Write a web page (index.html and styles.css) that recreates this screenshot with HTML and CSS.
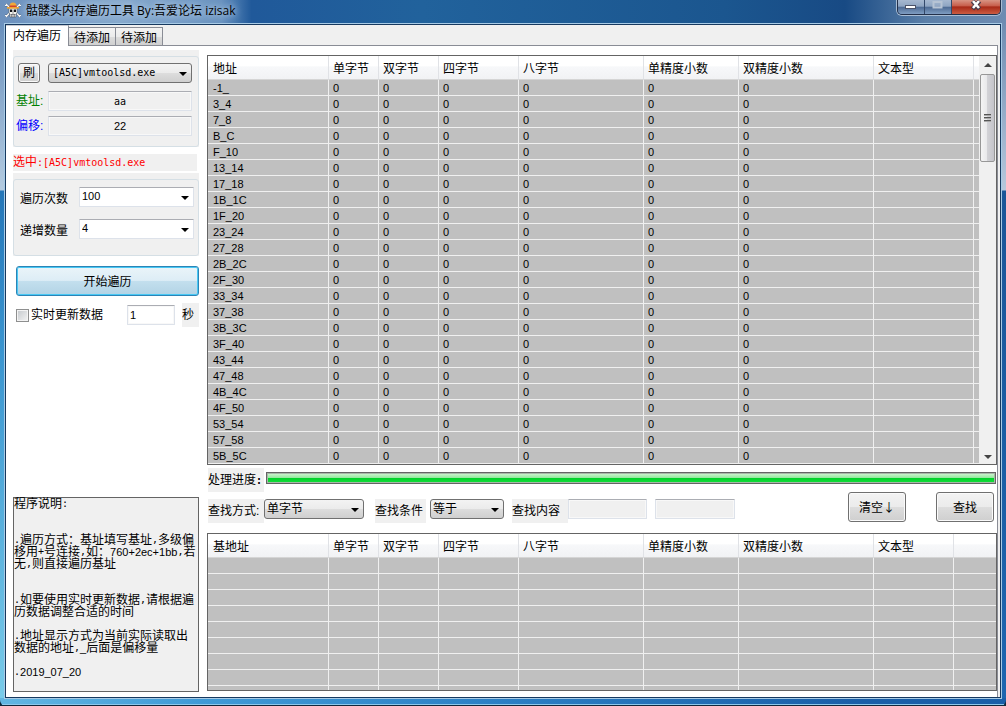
FILE: index.html
```html
<!DOCTYPE html>
<html lang="zh-CN">
<head>
<meta charset="utf-8">
<title>骷髅头内存遍历工具</title>
<link rel="stylesheet" href="styles.css">
</head>
<body>
<div class="window">
  <header class="titlebar">
    <svg class="app-icon" width="16" height="16" viewBox="0 0 16 16" aria-hidden="true">
      <path d="M1 2l3 3M0 3.500h2.500M15 2l-3 3M16 3.500h-2.500M1 15l3-3.500M0 13.500h2.500M15 15l-3-3.500M16 13.500h-2.500" stroke="#5a6a80" stroke-width="2" fill="none"/>
      <path d="M1 2l3 3M0 3.500h2.500M15 2l-3 3M16 3.500h-2.500M1 15l3-3.500M0 13.500h2.500M15 15l-3-3.500M16 13.500h-2.500" stroke="#f8f8f8" stroke-width="1.200" fill="none"/>
      <path d="M4 6h8v5l-1 1v3H5v-3l-1-1z" fill="#f3f3ee" stroke="#4a4a4a" stroke-width=".5"/>
      <path d="M4.500 4q0-3.500 3.500-3.500t3.500 3.500z" fill="#f0a93a"/>
      <path d="M4.500 3.500h7V5h-7z" fill="#d2422c"/>
      <path d="M2 5h12v1.600H2z" fill="#f2a52f"/>
      <path d="M5 7.500h2.300v2.500H5zM8.700 7.500H11V10H8.700zM7.600 10.500h.8v1h-.8z" fill="#15161a"/>
      <path d="M5.500 12.500h5M6.500 12v3M8 12v3M9.500 12v3" stroke="#55565c" stroke-width=".6"/>
    </svg>
    <h1 class="title">骷髅头内存遍历工具 By:吾爱论坛 izisak</h1>
    <div class="controls">
      <button class="ctl" aria-label="最小化"><svg width="28" height="15" viewBox="0 0 28 15"><rect x="8.500" y="5.500" width="10" height="3" fill="#fff" stroke="#4b5268"/></svg></button>
      <button class="ctl" aria-label="最大化"><svg width="28" height="15" viewBox="0 0 28 15"><rect x="9.500" y="2" width="8" height="5.500" fill="none" stroke="#b6c3d4" stroke-width="2"/></svg></button>
      <button class="ctl ctl-close" aria-label="关闭"><svg width="46" height="15" viewBox="0 0 46 15"><path d="M19.500 1l7 8M26.500 1l-7 8" stroke="#4a3a48" stroke-width="4.500"/><path d="M20 1l6 7M26 1l-6 7" stroke="#fff" stroke-width="2.600"/></svg></button>
    </div>
  </header>

  <main class="client">
    <nav class="tabs">
      <button class="tab tab-on">内存遍历</button>
      <button class="tab">待添加</button>
      <button class="tab">待添加</button>
    </nav>
    <div class="page">
      <aside class="side">
        <section class="group">
          <div class="group-in">
            <div class="row">
              <button class="btn btn-mini">刷</button>
              <span class="pick grow"><select class="mono" aria-label="进程"><option>[A5C]vmtoolsd.exe</option></select></span>
            </div>
            <div class="row row-field">
              <label class="green" for="base">基址:</label>
              <input class="box mono center grow" id="base" value="aa">
            </div>
            <div class="row row-offset">
              <label class="blue" for="offset">偏移:</label>
              <input class="box num center grow" id="offset" value="22">
            </div>
          </div>
        </section>
        <p class="chosen">选中<span class="mono">:[A5C]vmtoolsd.exe</span></p>
        <section class="group">
          <div class="group-in group-count">
            <div class="row">
              <label for="times">遍历次数</label>
              <span class="pick pick-white grow"><select class="num" id="times"><option>100</option></select></span>
            </div>
            <div class="row">
              <label for="step">递增数量</label>
              <span class="pick pick-white grow"><select class="num" id="step"><option>4</option></select></span>
            </div>
          </div>
        </section>
        <button class="btn btn-start">开始遍历</button>
        <div class="live">
          <input type="checkbox" class="check" id="live"><label for="live">实时更新数据</label>
          <input class="box box-white num seconds" id="sec" value="1">
          <label class="tag tag-sec" for="sec">秒</label>
        </div>
        <div class="notes">程序说明<i>:</i>


<i>.</i>遍历方式：基址填写基址<i>,</i>多级偏
移用<i>+</i>号连接<i>,</i>如：<b>760+2ec+1bb</b><i>,</i>若
无<i>,</i>则直接遍历基址


<i>.</i>如要使用实时更新数据<i>,</i>请根据遍
历数据调整合适的时间

<i>.</i>地址显示方式为当前实际读取出
数据的地址<i>,</i><b>_</b>后面是偏移量

<i>.</i><b>2019_07_20</b></div>
      </aside>

      <section class="content">
        <div class="list">
          <table class="grid">
            <colgroup><col class="c120"><col class="c50"><col class="c60"><col class="c80"><col class="c125"><col class="c95"><col class="c135"><col class="c100"><col></colgroup>
            <thead><tr><th>地址</th><th>单字节</th><th>双字节</th><th>四字节</th><th>八字节</th><th>单精度小数</th><th>双精度小数</th><th>文本型</th><th></th></tr></thead>
            <tbody id="memory"></tbody>
          </table>
          <div class="scroll">
            <span class="arrow arrow-up"></span>
            <div class="thumb"><span class="grip"></span></div>
            <span class="arrow arrow-down"></span>
          </div>
        </div>

        <div class="progress-row">
          <label class="tag" for="prog">处理进度<strong class="mono">:</strong></label>
          <progress id="prog" value="100" max="100"></progress>
        </div>

        <div class="search">
          <div class="filters">
            <label class="tag" for="mode">查找方式:</label>
            <span class="pick pick-mode"><select id="mode"><option>单字节</option></select></span>
            <label class="tag tag-cond" for="cond">查找条件</label>
            <span class="pick pick-cond"><select id="cond"><option>等于</option></select></span>
            <label class="tag tag-what" for="what">查找内容</label>
            <input class="box query" id="what">
            <input class="box query query-to" aria-label="查找内容上限">
          </div>
          <div class="actions">
            <button class="btn btn-act">清空↓</button>
            <button class="btn btn-act">查找</button>
          </div>
        </div>

        <div class="list list-found">
          <table class="grid">
            <colgroup><col class="c120"><col class="c50"><col class="c60"><col class="c80"><col class="c125"><col class="c95"><col class="c135"><col class="c80"><col></colgroup>
            <thead><tr><th>基地址</th><th>单字节</th><th>双字节</th><th>四字节</th><th>八字节</th><th>单精度小数</th><th>双精度小数</th><th>文本型</th><th></th></tr></thead>
            <tbody id="found"></tbody>
          </table>
        </div>
      </section>
    </div>
  </main>
</div>
<script src="app.js"></script>
</body>
</html>
```

FILE: app.js
```javascript
const hex = n => n.toString(16).toUpperCase();

function addRow(body, cells, className) {
  const row = body.insertRow();
  if (className) row.className = className;
  cells.forEach(text => { row.insertCell().textContent = text; });
}

const memory = document.getElementById('memory');
for (let i = 0; i < 24; i++) {
  const address = i === 0 ? '-1_' : hex(i * 4 - 1) + '_' + hex(i * 4);
  addRow(memory, [address, '0', '0', '0', '0', '0', '0', '', '']);
}

const found = document.getElementById('found');
for (let i = 0; i < 9; i++) {
  addRow(found, Array(9).fill(''), i === 8 ? 'rest' : '');
}
```

FILE: styles.css
```css
* { box-sizing: border-box; }

body {
  margin: 0;
  background: #10283c;
  color: #000;
  font: 12px/16px "Liberation Sans", "Noto Sans CJK SC", sans-serif;
}

button, input, select {
  font: inherit;
  color: inherit;
  margin: 0;
  padding: 0;
}

/* window frame */
.window {
  min-height: 100vh;
  display: flex;
  flex-direction: column;
  padding: 0 5px 8px;
  border-radius: 0 0 6px 6px;
  background:
    linear-gradient(#10283c, #10283c) bottom / 100% 1px no-repeat,
    linear-gradient(#8cc8ec, #8cc8ec) 0 calc(100% - 1px) / 100% 1px no-repeat,
    linear-gradient(90deg, #62b6e2, #3f9ad6 20%, #2b7fc4 50%, #1a5fa8 85%) bottom / 100% 8px no-repeat,
    linear-gradient(90deg, #6b90bd, #86a8cc 12%, #6a93c0 22%, #20599a 25%, #21629c 42%, #1b568f 72%, #184a84 84%, #5b7fa8 92%, #6e8cb2) top / 100% 24px no-repeat,
    linear-gradient(#5f88b8, #b4cbe0 190px, #2476b8 191px, #3a95d0 50%, #7accea) left / 50% 100% no-repeat,
    linear-gradient(#6584ac, #b6c8dc 190px, #1b5698 191px, #1d66b0) right / 50% 100% no-repeat;
}

.titlebar {
  display: flex;
  height: 24px;
}

.app-icon { margin-top: 2px; }

.title {
  flex: 1;
  margin: 3px 0 0 5px;
  font: 12px/16px "Open Sans", "Noto Sans CJK SC", sans-serif;
  text-shadow: 0 0 6px #b8d0ea, 0 0 8px #b8d0ea;
}

.controls {
  display: flex;
  height: 15px;
  border: 1px solid #23304a;
  border-top: 0;
  border-radius: 0 0 5px 5px;
  box-shadow: 0 0 0 1px #a9bdd4;
  overflow: hidden;
}

.ctl {
  width: 27px;
  border: 0;
  border-right: 1px solid #34496a;
  background: linear-gradient(#a6b8d0, #8fa5c2 45%, #4d6a93 50%, #7f9dc2);
  display: flex;
  justify-content: center;
}

.ctl svg { flex: none; }

.ctl-close {
  width: 48px;
  border-right: 0;
  background: linear-gradient(#d89484, #c8604e 40%, #a82a18 50%, #cc5c42);
}

.client {
  flex: 1;
  display: flex;
  flex-direction: column;
  border: 1px solid #17395f;
  box-shadow: 0 0 0 1px #a8cbe6;
  background: #f0f0f0;
}

/* tabs */
.tabs {
  display: flex;
  align-items: flex-end;
  height: 20px;
}

.tab {
  height: 18px;
  width: 47px;
  padding-top: 2px;
  border: 1px solid #898c95;
  border-bottom: 0;
  border-left: 0;
  background: linear-gradient(#f3f3f3, #ebebeb 50%, #dcdcdc 51%, #d0d0d0);
}

.tab-on {
  position: relative;
  width: 63px;
  height: 21px;
  margin-bottom: -1px;
  padding: 0;
  border-top: 1px solid #c8cad0;
  background: #fff;
}

.page {
  flex: 1;
  display: grid;
  grid-template-columns: 186px minmax(0, 1fr);
  column-gap: 8px;
  margin-right: 2px;
  padding-left: 7px;
  border: solid #898c95;
  border-width: 1px 1px 0 0;
  background: #fff;
}

/* shared controls */
.mono {
  font-family: "DejaVu Sans Mono", monospace;
  font-size: 10px;
}

.num { font-size: 11px; }

.grow { flex: 1; min-width: 0; }
.center { text-align: center; }
.green { color: #008000; }
.blue { color: #00f; }

.btn {
  border: 1px solid #707070;
  border-radius: 3px;
  background: linear-gradient(#f3f3f3, #ebebeb 50%, #dddddd 51%, #cfcfcf);
  box-shadow: inset 0 0 0 1px #fafafa;
  text-align: center;
}

.box {
  height: 20px;
  border: 1px solid #dde2ea;
  border-top-color: #abadb3;
  border-radius: 1px;
  background: #f0f0f0;
  box-shadow: inset 0 0 0 1px #f8f8f8;
}

.box-white { background: #fff; padding-left: 2px; }

.pick { position: relative; display: block; height: 20px; }

.pick select {
  appearance: none;
  display: block;
  width: 100%;
  height: 20px;
  padding: 0 16px 0 2px;
  border: 1px solid #707070;
  border-radius: 3px;
  background: linear-gradient(#f3f3f3, #ebebeb 50%, #dddddd 51%, #cfcfcf);
}

.pick .mono { padding-left: 4px; }

.pick::after {
  content: "";
  position: absolute;
  right: 5px;
  top: 9px;
  border: solid transparent;
  border-width: 4px 4px 0;
  border-top-color: #000;
  pointer-events: none;
}

.pick-white select {
  padding: 0 16px 2px 2px;
  border-color: #abadb3 #dde2ea #dde2ea;
  border-radius: 1px;
  background: #fff;
}

.tag {
  height: 24px;
  padding-top: 4px;
  background: #f0f0f0;
  white-space: nowrap;
}

/* left column */
.side {
  display: flex;
  flex-direction: column;
  padding: 4px 0 5px;
}

.group {
  padding-top: 6px;
  background: #f0f0f0;
}

.group-in {
  display: flex;
  flex-direction: column;
  height: 91px;
  padding: 6px 6px 0 4px;
  border: 1px solid #d5dfe5;
  border-radius: 3px;
}

.row { display: flex; align-items: center; height: 20px; }
.row-field { margin-top: 8px; }
.row-offset { margin-top: 5px; }
.row-field label, .row-offset label { width: 32px; margin-left: -2px; }
.btn-mini { width: 22px; height: 20px; margin-right: 8px; }

.chosen {
  margin: 7px 2px 2px 0;
  background: #f0f0f0;
  color: #f00;
}

.group-count {
  gap: 12px;
  height: 77px;
  padding: 7px 4px 0 6px;
}

.group-count label { width: 59px; padding-top: 3px; }

.btn-start {
  height: 30px;
  margin: 10px 0 0 3px;
  padding-top: 2px;
  border-color: #2c84b6;
  background: linear-gradient(#eaf4f9, #ddedf6 48%, #c3dfee 50%, #b2d3e5);
  box-shadow: inset 0 0 0 1px #48c8f4;
}

.live {
  display: flex;
  align-items: center;
  height: 24px;
  margin: 7px 0 0 3px;
}

.check {
  appearance: none;
  width: 13px;
  height: 13px;
  margin-right: 2px;
  border: 1px solid #8e8f8f;
  background: linear-gradient(135deg, #c4c8cc, #f4f4f4);
  box-shadow: inset 0 0 0 1px #f4f4f4;
}

.seconds { width: 48px; margin-left: auto; }
.tag-sec { width: 17px; margin-left: 7px; }

.notes {
  height: 195px;
  margin-top: auto;
  border: 1px solid #646464;
  background: #f0f0f0;
  line-height: 12px;
  white-space: pre;
}

.notes i, .notes b {
  font: 10px/12px "DejaVu Sans Mono", monospace;
  vertical-align: top;
}

.notes b { font: 11px/12px "Liberation Sans", sans-serif; }

/* right column */
.content {
  display: flex;
  flex-direction: column;
  padding: 9px 0 6px;
}

.list {
  display: flex;
  border: 1px solid #646464;
  background: #c0c0c0;
}

.grid {
  flex: 1;
  width: 0;
  table-layout: fixed;
  border-spacing: 0;
}

.c50 { width: 50px; }
.c60 { width: 60px; }
.c80 { width: 80px; }
.c95 { width: 95px; }
.c100 { width: 100px; }
.c120 { width: 120px; }
.c125 { width: 125px; }
.c135 { width: 135px; }

.grid th {
  height: 24px;
  padding: 2px 0 0 5px;
  border-bottom: 1px solid #d5d5d5;
  background: linear-gradient(#fff 45%, #f7f8fa 46%, #f1f2f4);
  font-weight: normal;
  text-align: left;
  white-space: nowrap;
}

.grid td {
  height: 16px;
  padding: 2px 0 0 5px;
  border-bottom: 1px solid #f0f0f0;
  font-size: 11px;
  line-height: 13px;
}

.grid th + th { padding-left: 4px; border-left: 1px solid #e0e2e6; }
.grid td + td { padding-left: 4px; border-left: 1px solid #f0f0f0; }
.grid .rest td { height: 4px; padding-top: 0; border-bottom: 0; line-height: 4px; }

.scroll {
  display: flex;
  flex-direction: column;
  align-items: center;
  width: 17px;
  padding: 7px 0 5px;
  background: #f0f0f0;
}

.arrow { border: 4px solid transparent; }
.arrow-up { border-top: 0; border-bottom-color: #444; }
.arrow-down { margin-top: auto; border-bottom: 0; border-top-color: #444; }

.thumb {
  display: flex;
  align-items: center;
  justify-content: center;
  width: 15px;
  height: 88px;
  margin-top: 7px;
  border: 1px solid #979797;
  border-radius: 2px;
  background: linear-gradient(90deg, #f4f4f4, #e8e8ea 48%, #d2d2d6 50%, #c4c4ca);
}

.grip {
  width: 7px;
  height: 8px;
  background: repeating-linear-gradient(#555 0 1px, #aaa 1px 2px, transparent 2px 3px);
}

.progress-row { display: flex; margin: 3px 0 0 1px; }
.progress-row .tag { width: 56px; }

progress {
  appearance: none;
  flex: 1;
  min-width: 0;
  height: 12px;
  margin: 4px 1px 0 2px;
  border: 1px solid #646464;
}

progress::-webkit-progress-bar { background: #e6e6e6; }

progress::-webkit-progress-value {
  border: 1px solid #a8b8a8;
  background: linear-gradient(#c8f4cc, #98e8a0 45%, #00d028 50%, #10dc38);
}

.search {
  display: flex;
  justify-content: space-between;
  height: 31px;
}

.filters { display: flex; padding: 7px 0 0 1px; }
.filters .tag:first-child { width: 56px; }
.pick-mode { width: 100px; }
.pick-cond { width: 74px; }
.filters .tag-cond { width: 51px; margin: 0 4px 0 11px; }
.filters .tag-what { width: 56px; margin-left: 8px; }
.query { width: 79px; }
.query-to { width: 80px; margin-left: 8px; }
.actions {
  display: flex;
  gap: 30px;
  padding-right: 3px;
  font-family: "Noto Sans CJK SC", sans-serif;
}
.btn-act { width: 58px; height: 30px; }

.list-found { margin-top: 10px; }
```
